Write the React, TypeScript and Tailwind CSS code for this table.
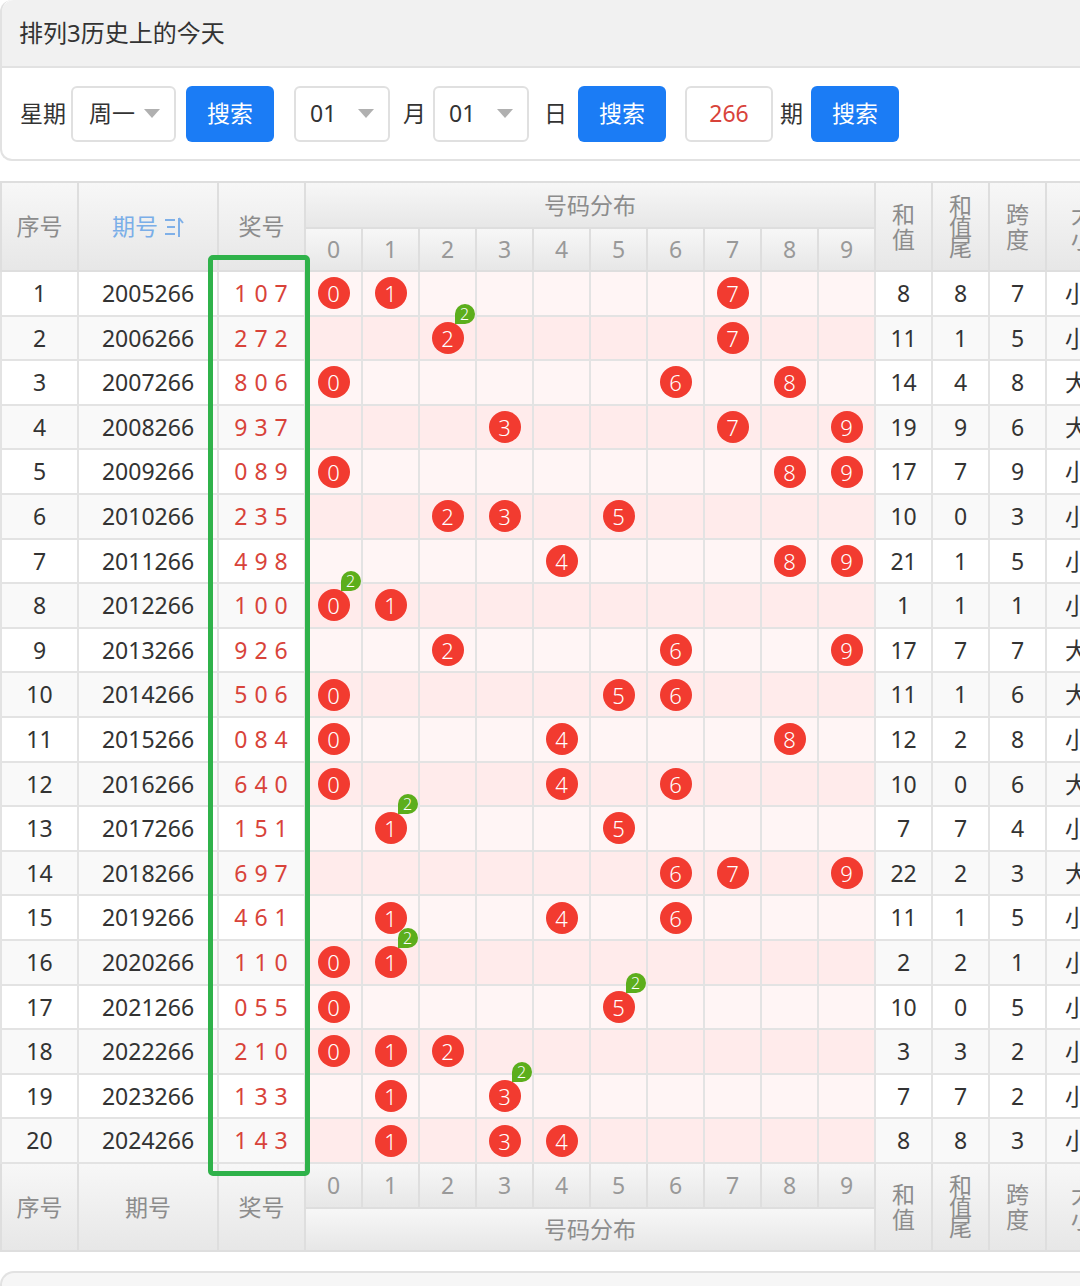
import React from "react";

const draws: [string, string][] = [
  ["2005266", "107"],
  ["2006266", "272"],
  ["2007266", "806"],
  ["2008266", "937"],
  ["2009266", "089"],
  ["2010266", "235"],
  ["2011266", "498"],
  ["2012266", "100"],
  ["2013266", "926"],
  ["2014266", "506"],
  ["2015266", "084"],
  ["2016266", "640"],
  ["2017266", "151"],
  ["2018266", "697"],
  ["2019266", "461"],
  ["2020266", "110"],
  ["2021266", "055"],
  ["2022266", "210"],
  ["2023266", "133"],
  ["2024266", "143"],
];

const sizes = ["小", "小", "大", "大", "小", "小", "小", "小", "大", "大", "小", "大", "小", "大", "小", "小", "小", "小", "小", "小"];

const digits = [0, 1, 2, 3, 4, 5, 6, 7, 8, 9];

const th =
  "border-2 border-[#dedede] bg-gradient-to-b from-[#f7f7f7] to-[#e7e7e7] font-normal text-[#8c8c8c] text-[23px] p-0 text-center";
const td = "border-2 border-[#e3e3e3] p-0 text-center text-[23px] text-[#333]";

function Caret() {
  return (
    <svg width="16" height="9" viewBox="0 0 16 9">
      <path d="M0 0 L16 0 L8 9 Z" fill="#b0b0b0" />
    </svg>
  );
}

function SortIcon() {
  return (
    <svg width="20" height="22" viewBox="0 0 20 22" className="ml-[6px]">
      <g stroke="#7fb0e8" strokeWidth="2" fill="none">
        <line x1="1" y1="4" x2="11" y2="4" />
        <line x1="3" y1="11" x2="11" y2="11" />
        <line x1="1" y1="18" x2="11" y2="18" />
        <line x1="15" y1="2" x2="15" y2="21" />
        <line x1="15" y1="2" x2="19" y2="7" />
      </g>
    </svg>
  );
}

function SearchButton() {
  return (
    <button className="h-[56px] w-[88px] rounded-[6px] bg-[#1b7cf5] text-[23px] text-white">
      搜索
    </button>
  );
}

function Ball({ n, count }: { n: number; count: number }) {
  return (
    <div className="relative mx-auto h-[32px] w-[32px] rounded-full bg-[#f23b30] text-[22px] leading-[32px] text-white font-light">
      {n}
      {count > 1 && (
        <span className="absolute left-[23px] top-[-18px] h-[20px] w-[20px] rounded-tl-full rounded-tr-full rounded-br-full bg-[#5cae1c] text-[16px] leading-[20px] text-white">
          {count}
        </span>
      )}
    </div>
  );
}

function HeadLeft({ rowSpan }: { rowSpan: number }) {
  return (
    <>
      <th rowSpan={rowSpan} className={th}>序号</th>
      <th rowSpan={rowSpan} className={th}>期号</th>
      <th rowSpan={rowSpan} className={th}>奖号</th>
    </>
  );
}

function HeadRight({ rowSpan }: { rowSpan: number }) {
  return (
    <>
      <th rowSpan={rowSpan} className={th + " text-[21px] leading-[25px]"}>
        和<br />值
      </th>
      <th rowSpan={rowSpan} className={th + " text-[19px] leading-[21px]"}>
        和<br />值<br />尾
      </th>
      <th rowSpan={rowSpan} className={th + " text-[21px] leading-[25px]"}>
        跨<br />度
      </th>
      <th rowSpan={rowSpan} className={th + " text-[21px] leading-[25px] text-left pl-[24px]"}>
        大<br />小
      </th>
    </>
  );
}

export default function App() {
  return (
    <div className="w-[1080px] overflow-hidden bg-white font-['Noto_Sans','Noto_Sans_CJK_SC',sans-serif] text-[#333]">
      {/* Search panel */}
      <div className="rounded-bl-[12px] rounded-tl-[12px] border-2 border-t-0 border-r-0 border-[#e2e2e2]">
        <div className="flex h-[68px] items-center rounded-tl-[12px] border-b-2 border-[#e2e2e2] bg-[#f1f1f1] pl-[17px] text-[24px] text-[#333]">
          排列3历史上的今天
        </div>
        <div className="flex h-[91px] items-center pl-[18px] text-[23px]">
          <span>星期</span>
          <div className="ml-[5px] flex h-[56px] w-[105px] items-center justify-between rounded-[6px] border-2 border-[#e0e0e0] pl-[16px] pr-[14px]">
            <span>周一</span>
            <Caret />
          </div>
          <div className="ml-[10px]">
            <SearchButton />
          </div>
          <div className="ml-[20px] flex h-[56px] w-[96px] items-center justify-between rounded-[6px] border-2 border-[#e0e0e0] pl-[14px] pr-[14px]">
            <span>01</span>
            <Caret />
          </div>
          <span className="ml-[13px]">月</span>
          <div className="ml-[7px] flex h-[56px] w-[96px] items-center justify-between rounded-[6px] border-2 border-[#e0e0e0] pl-[14px] pr-[14px]">
            <span>01</span>
            <Caret />
          </div>
          <span className="ml-[15px]">日</span>
          <div className="ml-[11px]">
            <SearchButton />
          </div>
          <div className="ml-[19px] flex h-[56px] w-[88px] items-center justify-center rounded-[6px] border-2 border-[#e0e0e0] text-[#d8433a]">
            266
          </div>
          <span className="ml-[7px]">期</span>
          <div className="ml-[8px]">
            <SearchButton />
          </div>
        </div>
      </div>

      {/* Table */}
      <div className="relative mt-[20px]">
        <table className="w-[1102px] table-fixed border-collapse">
          <colgroup>
            <col className="w-[77px]" />
            <col className="w-[140px]" />
            <col className="w-[87px]" />
            {digits.map((d) => (
              <col key={d} className="w-[57px]" />
            ))}
            <col className="w-[57px]" />
            <col className="w-[57px]" />
            <col className="w-[57px]" />
            <col className="w-[57px]" />
          </colgroup>
          <thead>
            <tr className="h-[46px]">
              <th rowSpan={2} className={th}>序号</th>
              <th rowSpan={2} className={th}>
                <span className="inline-flex items-center text-[#7aaee8]">
                  期号
                  <SortIcon />
                </span>
              </th>
              <th rowSpan={2} className={th}>奖号</th>
              <th colSpan={10} className={th}>号码分布</th>
              <HeadRight rowSpan={2} />
            </tr>
            <tr className="h-[43px]">
              {digits.map((d) => (
                <th key={d} className={th + " font-light text-[#999] text-[22px]"}>
                  {d}
                </th>
              ))}
            </tr>
          </thead>
          <tbody>
            {draws.map(([issue, num], i) => {
              const nums = num.split("").map(Number);
              const sum = nums.reduce((a, b) => a + b, 0);
              const span = Math.max(...nums) - Math.min(...nums);
              const even = i % 2 === 1;
              const plain = even ? "bg-[#f9f9f9]" : "bg-white";
              const pink = even ? "bg-[#ffebeb]" : "bg-[#fff5f5]";
              return (
                <tr key={issue} className="h-[44.6px]">
                  <td className={td + " " + plain}>{i + 1}</td>
                  <td className={td + " " + plain}>{issue}</td>
                  <td className={td + " " + plain + " tracking-[7px] text-[#d8433a] pl-[6px] text-[22px]"}>{num}</td>
                  {digits.map((d) => {
                    const count = nums.filter((x) => x === d).length;
                    return (
                      <td key={d} className={td + " " + pink}>
                        {count > 0 && <Ball n={d} count={count} />}
                      </td>
                    );
                  })}
                  <td className={td + " " + plain}>{sum}</td>
                  <td className={td + " " + plain}>{sum % 10}</td>
                  <td className={td + " " + plain}>{span}</td>
                  <td className={td + " " + plain + " text-left pl-[18px]"}>{sizes[i]}</td>
                </tr>
              );
            })}
          </tbody>
          <tfoot>
            <tr className="h-[45px]">
              <HeadLeft rowSpan={2} />
              {digits.map((d) => (
                <th key={d} className={th + " font-light text-[#999] text-[22px]"}>
                  {d}
                </th>
              ))}
              <HeadRight rowSpan={2} />
            </tr>
            <tr className="h-[43px]">
              <th colSpan={10} className={th}>号码分布</th>
            </tr>
          </tfoot>
        </table>
        {/* highlight around 奖号 column */}
        <div className="pointer-events-none absolute left-[208px] top-[74px] h-[921px] w-[102px] rounded-[5px] border-[5px] border-[#2fb24a]" />
      </div>

      <div className="mt-[19px] h-[20px] rounded-tl-[14px] border-l-2 border-t-2 border-[#e2e2e2] bg-[#f6f6f6]" />
    </div>
  );
}
